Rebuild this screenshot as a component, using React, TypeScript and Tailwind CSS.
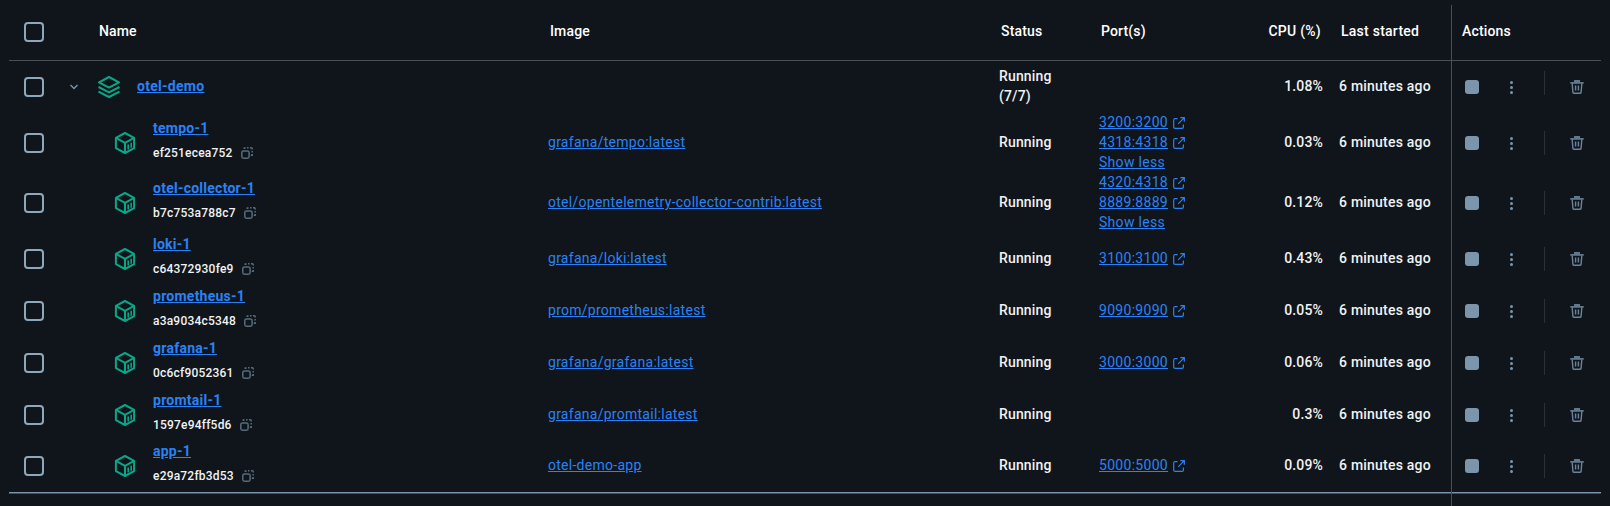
import React from "react";

type Container = {
  name: string;
  id: string;
  image: string;
  ports: string[];
  showLess?: boolean;
  cpu: string;
  height: string;
};

const containers: Container[] = [
  { name: "tempo-1", id: "ef251ecea752", image: "grafana/tempo:latest", ports: ["3200:3200", "4318:4318"], showLess: true, cpu: "0.03%", height: "h-[60px]" },
  { name: "otel-collector-1", id: "b7c753a788c7", image: "otel/opentelemetry-collector-contrib:latest", ports: ["4320:4318", "8889:8889"], showLess: true, cpu: "0.12%", height: "h-[60px]" },
  { name: "loki-1", id: "c64372930fe9", image: "grafana/loki:latest", ports: ["3100:3100"], cpu: "0.43%", height: "h-[52px]" },
  { name: "prometheus-1", id: "a3a9034c5348", image: "prom/prometheus:latest", ports: ["9090:9090"], cpu: "0.05%", height: "h-[52px]" },
  { name: "grafana-1", id: "0c6cf9052361", image: "grafana/grafana:latest", ports: ["3000:3000"], cpu: "0.06%", height: "h-[52px]" },
  { name: "promtail-1", id: "1597e94ff5d6", image: "grafana/promtail:latest", ports: [], cpu: "0.3%", height: "h-[52px]" },
  { name: "app-1", id: "e29a72fb3d53", image: "otel-demo-app", ports: ["5000:5000"], cpu: "0.09%", height: "mb-px h-[50px]" },
];

const row = "grid grid-cols-[90px_449px_451px_100px_142px_82px_128px_150px] items-center";
const link = "text-[#2a82f6] underline underline-offset-1";

function Checkbox() {
  return <span className="ml-[15px] block size-5 rounded-[4px] border-2 border-[#8fa7b8]" />;
}

function ChevronIcon() {
  return (
    <svg width="10" height="8" viewBox="0 0 10 8" fill="none" stroke="#7794ab" strokeWidth="1.4">
      <path d="M1.5 2 5 5.5 8.5 2" />
    </svg>
  );
}

function StackIcon() {
  return (
    <svg width="24" height="24" viewBox="0 0 24 24" fill="none" stroke="#0aa688" strokeWidth="2" strokeLinejoin="round">
      <path d="M12 2 22 7.3 12 12.6 2 7.3Z" />
      <path d="M1.5 12 12 17.4 22.5 12" />
      <path d="M1.5 16.6 12 22 22.5 16.6" />
    </svg>
  );
}

function CubeIcon() {
  return (
    <svg width="24" height="24" viewBox="0 0 24 24" fill="none" stroke="#0aa688" strokeWidth="2" strokeLinejoin="round">
      <path d="M12 2 21.1 6.9V17.1L12 22 2.9 17.1V6.9Z" />
      <path d="M2.9 6.9 12 11.8 21.1 6.9M12 11.8V22" />
      <path d="M15.2 13.4V18.4M18.2 11.8V16.8" strokeWidth="1.6" />
    </svg>
  );
}

function CopyIcon() {
  return (
    <svg width="12" height="12" viewBox="0 0 12 12" fill="none" stroke="#566b7d" strokeWidth="1.5">
      <rect x="0.8" y="3.9" width="7.3" height="7.3" rx="1.7" />
      <path d="M3.3 1.9V1.1H4.6M6 .8H7.6M9 .8H10.3Q11.2.8 11.2 1.6V2.6M11.2 4V5.4M11.2 6.9V8.3H9.8" />
    </svg>
  );
}

function ExternalIcon() {
  return (
    <svg width="12" height="12" viewBox="0 0 12 12" fill="none" stroke="#2a82f6" strokeWidth="1.2">
      <path d="M4.6 1.6H2.1Q.7 1.6.7 3V9.9Q.7 11.3 2.1 11.3H9Q10.4 11.3 10.4 9.9V7.4" />
      <path d="M7.3.7H11.3V4.7M11.3.7 5.2 6.8" />
    </svg>
  );
}

function TrashIcon() {
  return (
    <svg width="14" height="14" viewBox="0 0 14 14" fill="none" stroke="#6b8499" strokeWidth="1.4">
      <path d="M.3 2.9H13.7" stroke="#60788c" strokeWidth="1.8" />
      <path d="M4.7 2.4V.8H9.3V2.4" stroke="#60788c" fill="#60788c" />
      <path d="M2.2 3.6 2.9 12.1Q3 13.3 4.2 13.3H9.8Q11 13.3 11.1 12.1L11.8 3.6" />
      <path d="M5.6 5.6V10.6M8.4 5.6V10.6" />
    </svg>
  );
}

function Actions({ raised = false }: { raised?: boolean }) {
  return (
    <div className="flex items-center pl-[14px]">
      <span className="size-[14px] rounded-[3px] bg-[#7b95ab]" />
      <span className="ml-[31px] flex w-[3px] flex-col gap-[2px]">
        <i className="size-[3px] rounded-full bg-[#7b95ab]" />
        <i className="size-[3px] rounded-full bg-[#7b95ab]" />
        <i className="size-[3px] rounded-full bg-[#7b95ab]" />
      </span>
      <span className={`ml-[31px] h-6 w-px bg-[#2b3034] ${raised ? "mb-2" : ""}`} />
      <span className="ml-[25px]">
        <TrashIcon />
      </span>
    </div>
  );
}

function ContainerRow({ c }: { c: Container }) {
  return (
    <div className={`${row} ${c.height}`}>
      <Checkbox />
      <div className="flex items-center pl-[14px]">
        <CubeIcon />
        <div className="-mt-[5px] ml-4">
          <div className={`${link} text-sm leading-5 font-bold tracking-[0.25px]`}>{c.name}</div>
          <div className="mt-[5px] flex items-center gap-[8px] text-xs leading-5 font-medium tracking-[0.2px]">
            {c.id}
            <CopyIcon />
          </div>
        </div>
      </div>
      <div className="pb-0.5 tracking-[0.27px]"><span className={link}>{c.image}</span></div>
      <div className="pb-0.5 font-medium">Running</div>
      <div>
        {c.ports.map((p) => (
          <div key={p} className="flex h-5 items-center gap-[5px] tracking-[0.3px]">
            <span className={`${link} pb-0.5`}>{p}</span>
            <ExternalIcon />
          </div>
        ))}
        {c.showLess && <div className={`${link} -mt-px mb-px h-5 tracking-[0.3px]`}>Show less</div>}
      </div>
      <div className="pb-0.5 text-right font-medium">{c.cpu}</div>
      <div className="pb-0.5 pl-4 font-medium tracking-[0.22px]">6 minutes ago</div>
      <Actions />
    </div>
  );
}

export default function App() {
  return (
    <div className="relative h-[506px] w-[1610px] overflow-hidden bg-[#10151b] px-[9px] font-['Roboto',sans-serif] text-sm leading-5 tracking-[0.15px] text-[#f1f2f3]">
      <div className={`${row} h-[61px] border-b border-[#4c4f52] pt-[3px] font-medium text-white`}>
        <Checkbox />
        <div className="pb-0.5">Name</div>
        <div className="pb-0.5 pl-0.5">Image</div>
        <div className="pb-0.5 pl-0.5">Status</div>
        <div className="pb-0.5 pl-0.5">Port(s)</div>
        <div className="pr-0.5 pb-0.5 text-right tracking-[0.25px] whitespace-nowrap">CPU (%)</div>
        <div className="pb-0.5 pl-[18px] tracking-[0.25px]">Last started</div>
        <div className="pb-0.5 pl-[11px]">Actions</div>
      </div>
      <div className={`${row} h-[52px]`}>
        <div className="flex items-center">
          <Checkbox />
          <span className="ml-[25px]"><ChevronIcon /></span>
        </div>
        <div className="-ml-0.5 flex items-center gap-4">
          <StackIcon />
          <span className={`${link} pb-0.5 font-bold tracking-[0.28px]`}>otel-demo</span>
        </div>
        <div />
        <div className="pb-0.5 font-medium">Running<br />(7/7)</div>
        <div />
        <div className="pb-0.5 text-right font-medium">1.08%</div>
        <div className="pb-0.5 pl-4 font-medium tracking-[0.22px]">6 minutes ago</div>
        <Actions raised />
      </div>
      {containers.map((c) => (
        <ContainerRow key={c.name} c={c} />
      ))}
      <div className="h-[2px] border-t border-[#7b95ab] bg-[#4c4f52]" />
      <div className="absolute top-[5px] bottom-0 left-[1451px] w-px bg-[#4c4f52]" />
    </div>
  );
}
